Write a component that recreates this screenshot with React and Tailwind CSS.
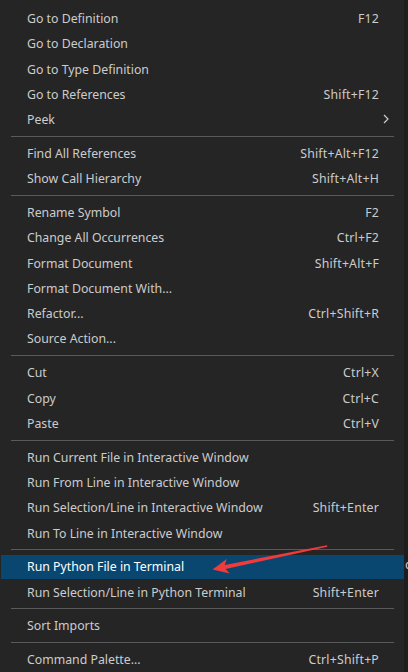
import React from 'react';

const groups = [
  [
    { label: 'Go to Definition', keys: 'F12' },
    { label: 'Go to Declaration' },
    { label: 'Go to Type Definition' },
    { label: 'Go to References', keys: 'Shift+F12' },
    { label: 'Peek', submenu: true },
  ],
  [
    { label: 'Find All References', keys: 'Shift+Alt+F12' },
    { label: 'Show Call Hierarchy', keys: 'Shift+Alt+H' },
  ],
  [
    { label: 'Rename Symbol', keys: 'F2' },
    { label: 'Change All Occurrences', keys: 'Ctrl+F2' },
    { label: 'Format Document', keys: 'Shift+Alt+F' },
    { label: 'Format Document With...' },
    { label: 'Refactor...', keys: 'Ctrl+Shift+R' },
    { label: 'Source Action...' },
  ],
  [
    { label: 'Cut', keys: 'Ctrl+X' },
    { label: 'Copy', keys: 'Ctrl+C' },
    { label: 'Paste', keys: 'Ctrl+V' },
  ],
  [
    { label: 'Run Current File in Interactive Window' },
    { label: 'Run From Line in Interactive Window' },
    { label: 'Run Selection/Line in Interactive Window', keys: 'Shift+Enter' },
    { label: 'Run To Line in Interactive Window' },
  ],
  [
    { label: 'Run Python File in Terminal', active: true },
    { label: 'Run Selection/Line in Python Terminal', keys: 'Shift+Enter' },
  ],
  [{ label: 'Sort Imports' }],
  [{ label: 'Command Palette...', keys: 'Ctrl+Shift+P' }],
];

const MenuItem = ({ item }) => (
  <div className="h-[25.3px] flex items-center">
    <div
      className={
        'h-[24px] w-full flex items-center pt-[2px] pl-[26px] pr-[25px] ' +
        (item.active ? 'bg-[#094771] text-white' : 'text-[#cccccc]')
      }
    >
      <span className="flex-1 whitespace-nowrap">{item.label}</span>
      {item.keys && <span className="whitespace-nowrap tracking-[0.2px]">{item.keys}</span>}
      {item.submenu && (
        <svg width="8" height="12" viewBox="0 0 8 12" className="-mr-[11px] -mt-[2px]">
          <path d="M2 2l4 4-4 4" fill="none" stroke="#cccccc" strokeWidth="1.2" />
        </svg>
      )}
    </div>
  </div>
);

const Separator = () => (
  <div className="h-[8.5px] flex items-center px-[10px]">
    <div className="h-px w-full bg-[#5a5a5a]" />
  </div>
);

export default function App() {
  return (
    <div className="relative w-[408px] h-[672px] overflow-hidden flex bg-[#1e1e1e] font-['Noto_Sans','Open_Sans',sans-serif] text-[12.3px]">
      <div className="w-[404px] h-full bg-[#252526] pl-px pt-[5.5px] flex flex-col">
        {groups.map((group, gi) => (
          <React.Fragment key={gi}>
            {gi > 0 && <Separator />}
            {group.map((item) => (
              <MenuItem key={item.label} item={item} />
            ))}
          </React.Fragment>
        ))}
      </div>
      <div className="relative flex-1 h-full overflow-hidden">
        <span className="absolute top-[555px] left-[1px] text-[13px] text-[#cccccc]">c</span>
      </div>

      {/* red annotation arrow */}
      <svg className="absolute left-0 top-0 pointer-events-none" width="408" height="672">
        <polygon
          points="212.5,569.5 226.7,559 224.8,564.9 327,545.3 327.4,546.8 225.6,568.9 229.7,573.6"
          fill="#ef3b3b"
        />
      </svg>
    </div>
  );
}
